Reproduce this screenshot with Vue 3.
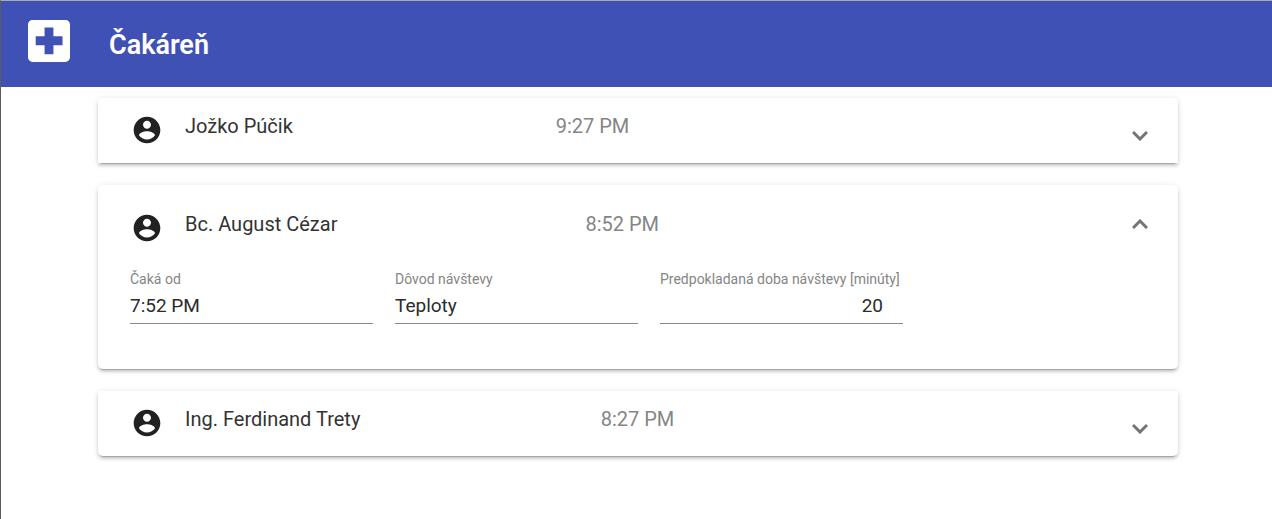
<script setup>
import { reactive } from 'vue'

const patients = reactive([
  { id: 'p1', name: 'Jožko Púčik', time: '9:27 PM', since: '8:27 PM', reason: 'Kontrola', minutes: 15, open: false },
  { id: 'p2', name: 'Bc. August Cézar', time: '8:52 PM', since: '7:52 PM', reason: 'Teploty', minutes: 20, open: true },
  { id: 'p3', name: 'Ing. Ferdinand Trety', time: '8:27 PM', since: '7:27 PM', reason: 'Kontrola', minutes: 15, open: false }
])
</script>

<template>
  <div class="page">
    <header class="toolbar">
      <svg class="logo" viewBox="3 3 18 18" aria-hidden="true">
        <path fill="currentColor" d="M19 3H5c-1.100 0-1.990.9-1.990 2L3 19c0 1.100.9 2 2 2h14c1.100 0 2-.9 2-2V5c0-1.100-.9-2-2-2zm-1.200 10.800h-3.900v3.900h-3.800v-3.900H6.300V10h3.800V6.200h3.800V10h3.900z" />
      </svg>
      <h1>Čakáreň</h1>
    </header>

    <main class="list">
      <section v-for="p in patients" :key="p.id" class="panel" :class="{ open: p.open }">
        <button class="panel-header" type="button" :aria-expanded="p.open" @click="p.open = !p.open">
          <span class="title">
            <svg class="avatar" viewBox="0 0 24 24" aria-hidden="true">
              <path fill="currentColor" d="M12 2C6.480 2 2 6.480 2 12s4.480 10 10 10 10-4.480 10-10S17.520 2 12 2zm0 3c1.660 0 3 1.340 3 3s-1.340 3-3 3-3-1.340-3-3 1.340-3 3-3zm0 14.200c-2.500 0-4.710-1.280-6-3.220.03-1.990 4-3.080 6-3.080 1.990 0 5.970 1.090 6 3.080-1.290 1.940-3.500 3.220-6 3.220z" />
            </svg>
            <span class="name">{{ p.name }}</span>
          </span>
          <span class="time">{{ p.time }}</span>
          <svg class="chevron" viewBox="0 0 16 10" aria-hidden="true">
            <path fill="none" stroke="currentColor" stroke-width="3" :d="p.open ? 'M1 9l7-7 7 7' : 'M1 1l7 7 7-7'" />
          </svg>
        </button>

        <div v-if="p.open" class="fields">
          <div class="field">
            <label :for="p.id + '-since'">Čaká od</label>
            <input :id="p.id + '-since'" v-model="p.since" type="text" />
          </div>
          <div class="field">
            <label :for="p.id + '-reason'">Dôvod návštevy</label>
            <input :id="p.id + '-reason'" v-model="p.reason" type="text" />
          </div>
          <div class="field number">
            <label :for="p.id + '-minutes'">Predpokladaná doba návštevy [minúty]</label>
            <input :id="p.id + '-minutes'" v-model="p.minutes" type="text" inputmode="numeric" />
          </div>
        </div>
      </section>
    </main>
  </div>
</template>

<style>
body {
  background: #fff;
}
</style>

<style scoped>
.page {
  box-sizing: border-box;
  min-height: 100vh;
  border-top: 1px solid #a9a9a9;
  border-left: 1px solid #5c5c5c;
  font-family: Roboto, "Liberation Sans", sans-serif;
  color: #212121;
}
.toolbar {
  display: flex;
  align-items: center;
  gap: 39px;
  box-sizing: border-box;
  height: 86px;
  padding: 2px 27px 0;
  background: #3f51b5;
  color: #fff;
}
.logo {
  width: 42px;
  height: 42px;
  margin-bottom: 8px;
}
h1 {
  margin: 0;
  font-size: 27px;
  line-height: 32px;
  font-weight: 600;
}
.list {
  display: flex;
  flex-direction: column;
  gap: 22px;
  padding: 11px 94px 32px 97px;
}
.panel {
  border-radius: 5px;
  background: #fff;
  box-shadow: 0 4px 1px -3px rgba(0, 0, 0, 0.2), 0 3px 3px 0 rgba(0, 0, 0, 0.14), 0 1px 6px 0 rgba(0, 0, 0, 0.12);
}
.panel:first-child {
  border-radius: 5px 5px 0 0;
}
.panel:last-child {
  border-radius: 0 0 5px 5px;
}
.panel-header {
  display: flex;
  align-items: center;
  gap: 23px;
  box-sizing: border-box;
  width: 100%;
  height: 65px;
  padding: 0 30px 2px 33px;
  border: 0;
  background: none;
  font: inherit;
  font-size: 20px;
  line-height: 24px;
  color: inherit;
  text-align: left;
  cursor: pointer;
}
.open .panel-header {
  height: 85px;
  padding-bottom: 0;
}
.title {
  display: flex;
  flex: 1 1 auto;
  gap: 22px;
}
.avatar {
  width: 32px;
  height: 32px;
}
.name,
.time {
  padding-bottom: 8px;
}
.name {
  color: #333;
}
.time {
  flex: 2 1 auto;
  color: #858585;
}
.chevron {
  width: 16px;
  height: 10px;
  margin-top: 12px;
  color: #757575;
}
.open .chevron {
  margin: 0 0 8px;
}
.fields {
  display: flex;
  gap: 22px;
  padding: 0 32px 45px;
}
.field {
  flex: 0 1 243px;
  min-width: 0;
}
.field label {
  display: block;
  font-size: 14px;
  line-height: 18px;
  color: #858585;
  white-space: nowrap;
}
.field input {
  box-sizing: border-box;
  display: block;
  width: 100%;
  height: 36px;
  padding: 0;
  border: 0;
  border-bottom: 1px solid #8a8a8a;
  border-radius: 0;
  outline: 0;
  background: none;
  font: inherit;
  font-size: 19px;
  color: #2b2b2b;
}
.number input {
  padding-right: 20px;
  text-align: right;
}
</style>
